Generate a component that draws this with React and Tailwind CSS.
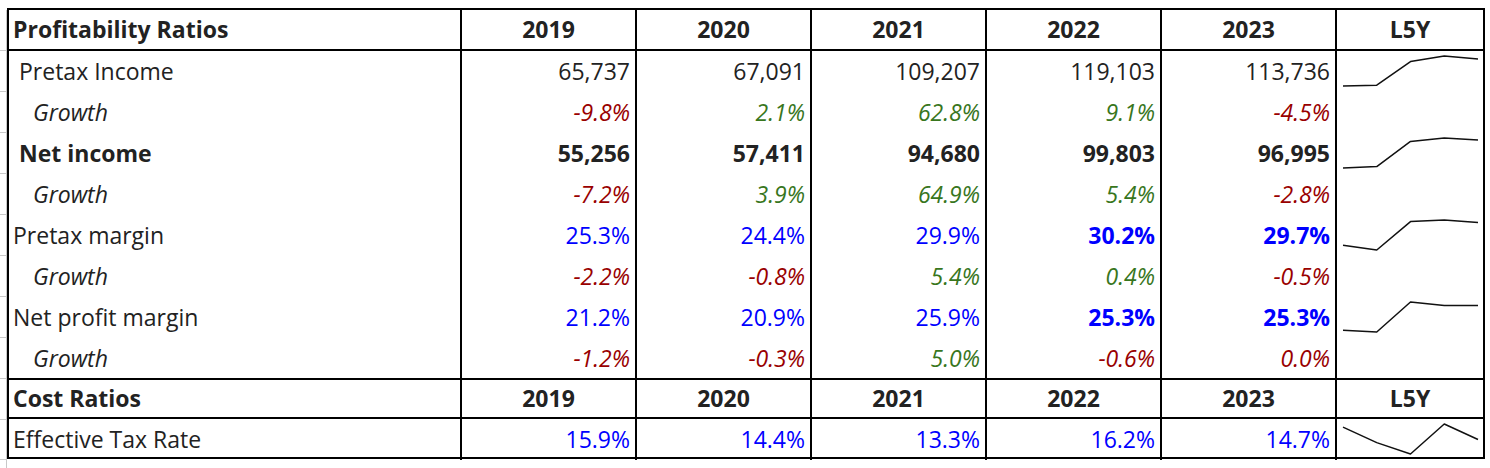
import React from 'react';

const YEARS = ['2019', '2020', '2021', '2022', '2023'];
const COLS = 'grid grid-cols-[453px_175px_175px_175px_175px_175px_146px]';

const RED = 'text-[#990000]';
const GREEN = 'text-[#38761d]';
const BLUE = 'text-[#0000ff]';

const growth = (vals) => vals.map((v) => ({ text: `${v.toFixed(1)}%`, color: v > 0 ? GREEN : RED }));
const pct = (vals, boldFrom = 5) =>
  vals.map((v, i) => ({ text: `${v.toFixed(1)}%`, color: BLUE, bold: i >= boldFrom }));

const PROFIT_ROWS = [
  {
    label: 'Pretax Income',
    labelClass: 'pl-[10px]',
    cells: ['65,737', '67,091', '109,207', '119,103', '113,736'].map((t) => ({ text: t })),
    spark: [65737, 67091, 109207, 119103, 113736],
  },
  { label: 'Growth', labelClass: 'pl-[24px] italic', italic: true, cells: growth([-9.8, 2.1, 62.8, 9.1, -4.5]) },
  {
    label: 'Net income',
    labelClass: 'pl-[10px] font-bold',
    cells: ['55,256', '57,411', '94,680', '99,803', '96,995'].map((t) => ({ text: t, bold: true })),
    spark: [55256, 57411, 94680, 99803, 96995],
  },
  { label: 'Growth', labelClass: 'pl-[24px] italic', italic: true, cells: growth([-7.2, 3.9, 64.9, 5.4, -2.8]) },
  {
    label: 'Pretax margin',
    labelClass: 'pl-[4px]',
    cells: pct([25.3, 24.4, 29.9, 30.2, 29.7], 3),
    spark: [25.3, 24.4, 29.9, 30.2, 29.7],
  },
  { label: 'Growth', labelClass: 'pl-[24px] italic', italic: true, cells: growth([-2.2, -0.8, 5.4, 0.4, -0.5]) },
  {
    label: 'Net profit margin',
    labelClass: 'pl-[4px]',
    cells: pct([21.2, 20.9, 25.9, 25.3, 25.3], 3),
    spark: [21.2, 20.9, 25.9, 25.3, 25.3],
  },
  { label: 'Growth', labelClass: 'pl-[24px] italic', italic: true, cells: growth([-1.2, -0.3, 5.0, -0.6, 0.0]) },
];

function Sparkline({ values }) {
  const min = Math.min(...values);
  const max = Math.max(...values);
  const pts = values
    .map((v, i) => {
      const x = 6 + i * 33.75;
      const y = 5 + ((max - v) / (max - min || 1)) * 30;
      return `${x},${y}`;
    })
    .join(' ');
  return (
    <svg width="146" height="41" className="block">
      <polyline points={pts} fill="none" stroke="#111" strokeWidth="1.5" strokeLinejoin="round" />
    </svg>
  );
}

function HeaderRow({ title, className = '' }) {
  return (
    <div className={`${COLS} h-[41px] border-black ${className}`}>
      <div className="border-r-2 border-black pl-[4px] flex items-center font-bold">{title}</div>
      {YEARS.map((y) => (
        <div key={y} className="border-r-2 border-black flex items-center justify-center font-bold">
          {y}
        </div>
      ))}
      <div className="flex items-center justify-center font-bold">L5Y</div>
    </div>
  );
}

function DataRow({ row, height = 'h-[41px]' }) {
  return (
    <div className={`${COLS} ${height}`}>
      <div className={`border-r-2 border-black flex items-center ${row.labelClass}`}>{row.label}</div>
      {row.cells.map((c, i) => (
        <div
          key={i}
          className={`border-r-2 border-black flex items-center justify-end pr-[5px] ${c.color ?? ''} ${
            c.bold ? 'font-bold' : ''
          } ${row.italic ? 'italic' : ''}`}
        >
          {c.text}
        </div>
      ))}
      <div>{row.spark && <Sparkline values={row.spark} />}</div>
    </div>
  );
}

export default function App() {
  return (
    <div className="w-[1490px] h-[468px] bg-white flex font-['Open_Sans',sans-serif] text-[23px] leading-none text-[#222] overflow-hidden">
      {/* spreadsheet row-header edge */}
      <div className="w-[7px] flex flex-col pt-[10px]">
        <div className="w-[7px] border-r border-[#c8c8c8] h-[41px] border-b" />
        {PROFIT_ROWS.map((_, i) => (
          <div key={i} className="w-[7px] border-r border-b border-[#c8c8c8] h-[41px]" />
        ))}
        <div className="w-[7px] border-r border-b border-[#c8c8c8] h-[41px]" />
        <div className="w-[7px] border-r border-b border-[#c8c8c8] h-[40px]" />
        <div className="w-[7px] border-r border-[#c8c8c8] flex-1" />
      </div>

      <div className="pt-[8px]">
        <div className="border-2 border-black w-[1478px]">
          <HeaderRow title="Profitability Ratios" className="h-[41px] border-b-2" />
          {PROFIT_ROWS.map((row, i) => (
            <DataRow key={i} row={row} height={i === PROFIT_ROWS.length - 1 ? 'h-[40px]' : 'h-[41px]'} />
          ))}
          <HeaderRow title="Cost Ratios" className="border-t-2 border-b-2" />
          <DataRow
            row={{
              label: 'Effective Tax Rate',
              labelClass: 'pl-[4px]',
              cells: pct([15.9, 14.4, 13.3, 16.2, 14.7]),
              spark: [15.9, 14.4, 13.3, 16.2, 14.7],
            }}
            height="h-[38px]"
          />
        </div>
      </div>
    </div>
  );
}
